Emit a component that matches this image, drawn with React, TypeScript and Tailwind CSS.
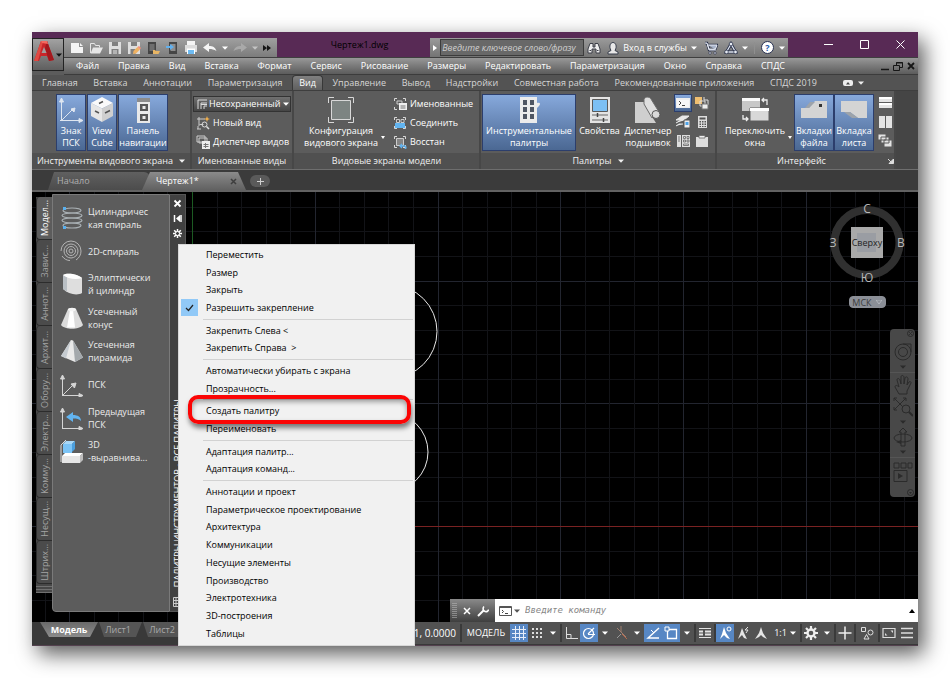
import type { ReactNode } from "react";
import clsx from "clsx";

const menuBar = ["Файл", "Правка", "Вид", "Вставка", "Формат", "Сервис", "Рисование", "Размеры", "Редактировать", "Параметризация", "Окно", "Справка", "СПДС"];

const ribbonTabs = ["Главная", "Вставка", "Аннотации", "Параметризация", "Вид", "Управление", "Вывод", "Надстройки", "Совместная работа", "Рекомендованные приложения", "СПДС 2019"];

const paletteTabs = ["Модел...", "Завис...", "Аннот...", "Архит...", "Обору...", "Электр...", "Комму...", "Несущ...", "Штрих..."];

const contextMenu = [
    ["Переместить", "Размер", "Закрыть", "Разрешить закрепление"],
    ["Закрепить Слева <", "Закрепить Справа  >"],
    ["Автоматически убирать с экрана", "Прозрачность..."],
    ["Создать палитру", "Переименовать"],
    ["Адаптация палитр...", "Адаптация команд..."],
    ["Аннотации и проект", "Параметрическое проектирование", "Архитектура", "Коммуникации", "Несущие элементы", "Производство", "Электротехника", "3D-построения", "Таблицы"],
];

function Icon({ w = 14, h = 14, children, className }: { w?: number; h?: number; children: ReactNode; className?: string }) {
    return (
        <svg width={w} height={h} viewBox={`0 0 ${w} ${h}`} fill="none" aria-hidden="true" className={clsx("shrink-0", className)}>
            {children}
        </svg>
    );
}

function Caret({ className }: { className?: string }) {
    return (
        <Icon w={6} h={4} className={className}>
            <path d="M0 .5h6L3 3.8z" fill="currentColor" />
        </Icon>
    );
}

/* ---------- title bar ---------- */

const quickIcons: { label: string; icon: ReactNode }[] = [
    { label: "Создать", icon: <path d="M1 2h8v4h4v6H1z M10 2l3 3h-3z" fill="#f4f4f4" /> },
    { label: "Открыть", icon: <><path d="M1.500 12V2.500h4l1 2h4v2" stroke="#e6e6e6" /><path d="M1.500 12.500 4 6.500h10L11 12.500z" fill="#e6e6e6" /></> },
    { label: "Сохранить", icon: <><path d="M1 1h12v12H1z" fill="#dedede" /><path d="M4 1h6v4H4zM3.500 8h7v5h-7z" fill="#808080" /><path d="M5 10h4M5 12h4" stroke="#e6e6e6" /></> },
    { label: "Сохранить как", icon: <><path d="M1 1h12v12H1z" fill="#dedede" /><path d="M4 1h6v4H4zM3.500 8h5v5h-5z" fill="#808080" /><path d="m6 13 .5-3 4-4 2.500 2.500-4 4z" fill="#efb262" /><path d="m10.500 6 2.500 2.500 1-1.500-2-2z" fill="#f58e78" /></> },
    { label: "Открыть из веб", icon: <><path d="M2 1h8v12H2z" fill="#454545" /><path d="M3.500 3h5v7h-5z" fill="#6e6e6e" /><path d="M7 13V9h2l1 1h4l-1.500 3z" fill="#e7b565" /></> },
    { label: "Сохранить в веб", icon: <><path d="M4 1h8v12H4z" fill="#454545" /><path d="M5.500 3h5v7h-5z" fill="#8d8d8d" /><path d="M1 5h4V3l4 3-4 3V7H1z" fill="#62b1ee" /></> },
    { label: "Печать", icon: <><path d="M3 0h8v4H3z" fill="#f4f4f4" /><path d="M1 4h12v7H1z" fill="#dcdcdc" /><path d="M3 7.500h8V13H3z" fill="#fff" /><path d="M4 9h6v4H4z" fill="#6dbbf2" /></> },
];

function Header() {
    return (
        <header className="flex bg-[#5c5c5c]">
            <div className="flex w-8 shrink-0 flex-col bg-[#582a55] pt-[6px]">
                <button aria-label="Меню приложения" className="flex h-[33px] items-center justify-center gap-[2px] border border-[#222] bg-linear-to-b from-[#a2a2a2] to-[#5f5f5f] pb-[8px] text-[#111]">
                    <Icon w={20} h={22}>
                        <path d="M7 1h6l7 19-5 1-2-5H7l-2 5H0z" fill="#c9262a" />
                        <path d="m7 1 2 1-5 19H0z" fill="#e04a43" />
                        <path d="m13 1 7 19-5 1-4-13z" fill="#a3181d" />
                        <path d="m10 7 2.500 6h-5z" fill="#a0a0a0" />
                        <path d="M7 1h6l1 3-6-1z" fill="#f26a60" />
                    </Icon>
                    <Caret className="mt-2" />
                </button>
                <div className="flex-1 bg-[#5c5c5c]" />
            </div>
            <div className="flex min-w-0 flex-1 flex-col">
                <div className="flex h-[25px] items-end bg-[#582a55]">
                    <div className="flex h-[19px] items-center gap-[5px] bg-linear-to-b from-[#a0a0a0] to-[#7c7c7c] px-[6px]">
                        {quickIcons.map((q) => (
                            <button key={q.label} aria-label={q.label}><Icon>{q.icon}</Icon></button>
                        ))}
                        <button aria-label="Отменить" className="flex items-center gap-[5px] text-white">
                            <Icon w={14} h={10}><path d="M0 4.500 6 0v3c4 0 6 1 7.500 5C11 6.500 9 6 6 6v3z" fill="#f4f4f4" /></Icon>
                            <Caret />
                        </button>
                        <button aria-label="Вернуть" className="flex items-center gap-[5px] text-[#c4c4c4]">
                            <Icon w={14} h={10}><path d="M14 4.500 8 0v3C4 3 2 4 .5 8 3 6.500 5 6 8 6v3z" fill="#a9a9a9" /></Icon>
                            <Caret />
                        </button>
                        <button aria-label="Ещё">
                            <Icon w={8} h={8}><path d="M0 1l4 3-4 3zM4 1l4 3-4 3z" fill="#151515" /></Icon>
                        </button>
                    </div>
                    <div className="flex-1 self-center pl-3 text-center text-[9px] text-black">Чертеж1.dwg</div>
                    <div className="flex h-[19px] items-center bg-linear-to-b from-[#9b9b9b] to-[#747474] pr-[3px] text-white">
                        <button aria-label="Показать поиск" className="flex w-[10px] justify-center">
                            <Icon w={4} h={6}><path d="M0 0l4 3-4 3z" fill="#fff" /></Icon>
                        </button>
                        <input aria-label="Поиск" placeholder="Введите ключевое слово/фразу" className="h-[17px] w-36 border border-[#3c3c3c] bg-[#686868] px-px text-[9px] italic placeholder:text-[#cfcfcf]" />
                        <div className="flex items-center gap-[6px] pl-[3px]">
                            <button aria-label="Найти">
                                <Icon><path d="M3 2.500h3V6h2V2.500h3L13 8v4H9V8H5v4H1V8z" fill="#eee" stroke="#3c3f48" /><path d="M2.500 9.500h1.500M10 9.500h1.500" stroke="#3c3f48" /></Icon>
                            </button>
                            <button className="flex items-center gap-[4px] whitespace-nowrap text-[9px]">
                                <Icon w={12} h={14}><path d="M1 13v-2l3-1.500C1.500 5 3.500 1.500 6 1.500S10.500 5 8 9.500L11 11v2z" fill="#e8e8e8" stroke="#383e4c" /></Icon>
                                Вход в службы
                                <Caret />
                            </button>
                        </div>
                        <div className="flex items-center gap-[6px] pl-[7px]">
                            <button aria-label="Магазин">
                                <Icon><path d="M1 2h2l2 7h7M3.500 4H13l-1.500 4H5z" stroke="#28304a" strokeWidth="2.400" /><path d="M1 2h2l2 7h7M3.500 4H13l-1.500 4H5z" fill="#a8b3ca" stroke="#e8ecf4" /><path d="M5 11h2v2H5zM10 11h2v2h-2z" fill="#e8ecf4" stroke="#28304a" strokeWidth=".6" /></Icon>
                            </button>
                            <button aria-label="Связь" className="flex items-center gap-[4px]">
                                <Icon><path d="M7 3 11.500 11h-9z" stroke="#28304a" strokeWidth="3" /><path d="M7 3 11.500 11h-9z" stroke="#dfe5f0" strokeWidth="1.300" /><circle cx="7" cy="3" r="1.800" fill="#e8ecf4" stroke="#28304a" strokeWidth=".7" /><circle cx="2.500" cy="11" r="1.800" fill="#e8ecf4" stroke="#28304a" strokeWidth=".7" /><circle cx="11.500" cy="11" r="1.800" fill="#e8ecf4" stroke="#28304a" strokeWidth=".7" /></Icon>
                                <Caret />
                            </button>
                            <span className="h-3 w-px bg-[#8f8f8f]" />
                            <button aria-label="Справка" className="flex items-center gap-[5px]">
                                <span className="flex size-[13px] items-center justify-center rounded-full border border-[#283252] bg-white text-[9px] font-bold text-[#1d58a8]">?</span>
                                <Caret />
                            </button>
                        </div>
                    </div>
                    <div className="flex self-center pl-[22px] text-white">
                        <button aria-label="Свернуть" className="flex h-5 w-9 items-center justify-center"><Icon w={9} h={9}><path d="M0 4.500h9" stroke="currentColor" /></Icon></button>
                        <button aria-label="Развернуть" className="flex h-5 w-9 items-center justify-center"><Icon w={9} h={9}><path d="M.5.5h8v8h-8z" stroke="currentColor" /></Icon></button>
                        <button aria-label="Закрыть" className="flex h-5 w-9 items-center justify-center"><Icon w={9} h={9}><path d="m.5.5 8 8m0-8-8 8" stroke="currentColor" /></Icon></button>
                    </div>
                </div>
                <nav className="flex h-[18px] items-center justify-between border-y border-t-[#3f3f3f] border-b-[#3c3c3c] bg-linear-to-b from-[#989898] to-[#5c5c5c] pr-[3px] pl-3">
                    <div className="flex w-[709px] justify-between text-[9px] font-medium text-white">
                        {menuBar.map((m) => <button key={m}>{m}</button>)}
                    </div>
                    <div className="flex items-center gap-[4px] text-[#161616]">
                        <button aria-label="Свернуть чертёж"><Icon w={9} h={9}><path d="M1 7.500h8" stroke="currentColor" strokeWidth="1.500" /></Icon></button>
                        <button aria-label="Восстановить чертёж"><Icon w={10} h={9}><path d="M3.500 3V.5h6v5H7M.5 3.500h6v5h-6z" stroke="currentColor" /><path d="M3 1h7" stroke="currentColor" /></Icon></button>
                        <button aria-label="Закрыть чертёж"><Icon w={8} h={8}><path d="m1 1 6 6m0-6L1 7" stroke="currentColor" strokeWidth="1.800" /></Icon></button>
                    </div>
                </nav>
            </div>
        </header>
    );
}

function RibbonTabs() {
    return (
        <nav className="flex h-4 items-center border-b border-[#3e3e3e] bg-[#535353] pl-[10px] text-[9px] text-[#d6d6d6]">
            <div className="flex h-full w-[775px] items-center justify-between">
                {ribbonTabs.map((t) => (
                    <button key={t} className={clsx("h-full whitespace-nowrap", t === "Вид" && "-mx-[6px] rounded-t-sm border border-b-0 border-[#383838] bg-linear-to-b from-[#808080] to-[#5f5f5f] px-[6px] text-white")}>{t}</button>
                ))}
            </div>
            <button aria-label="Вид ленты" className="ml-[26px] flex items-center gap-[5px] text-[#eee]">
                <Icon w={10} h={6}><rect width="10" height="6" rx="2" fill="#eee" /><path d="M3 4.500h4L5 2z" fill="#444" /></Icon>
                <Caret />
            </button>
        </nav>
    );
}

/* ---------- ribbon ---------- */

function Panel({ title, children, className, caret, launcher }: { title: string; children: ReactNode; className: string; caret?: boolean; launcher?: boolean }) {
    return (
        <section className={clsx("flex shrink-0 flex-col border-r-2 border-[#474747] bg-[#5c5c5c]", className)}>
            <div className="flex h-[62px] items-start pt-[3px]">{children}</div>
            <h2 className={clsx("flex h-4 items-center justify-center gap-[6px] bg-[#505050] pb-px text-[9px] whitespace-nowrap text-[#f0f0f0]", launcher && "pr-2")}>
                {title}
                {caret && <Caret />}
                {launcher && (
                    <Icon w={6} h={6} className="absolute right-[24px]"><path d="M0 1l3 3M5.500 1v4.500H1z" stroke="#ddd" fill="#ddd" /></Icon>
                )}
            </h2>
        </section>
    );
}

function BigButton({ icon, lines, active, className, caret }: { icon: ReactNode; lines: string[]; active?: boolean; className: string; caret?: boolean }) {
    return (
        <button className={clsx("flex h-[57px] shrink-0 flex-col items-center border pt-px text-[9px] leading-[12px] whitespace-nowrap text-white", active ? "border-[#2c3e6c] bg-linear-to-b from-[#87a9dc] to-[#4b6893]" : "border-transparent", className)}>
            <Icon w={28} h={28}>{icon}</Icon>
            <span className="mt-px flex items-center gap-[3px]">
                <span>{lines.map((l) => <span key={l} className="block">{l}</span>)}</span>
                {caret && <Icon w={4} h={3} className="-mr-[7px]"><path d="M0 0h4L2 3z" fill="#fff" /></Icon>}
            </span>
        </button>
    );
}

function SmallRow({ icon, label }: { icon: ReactNode; label: string }) {
    return (
        <button className="flex h-[17px] items-center gap-[3px] text-[9px] whitespace-nowrap text-white">
            <Icon>{icon}</Icon>
            {label}
        </button>
    );
}

const corners = <path d="M1.500 4V1.500H4M10 1.500h2.500V4M1.500 10v2.500H4M10 12.500h2.500V10" stroke="#d8d8d8" />;

function Ribbon() {
    return (
        <div className="relative flex h-[79px] border-b border-[#6e6e6e] bg-[#454545]">
            <Panel title="Инструменты видового экрана" caret className="w-[160px]">
                <div className="flex gap-px pl-6">
                    <BigButton active className="w-[30px]" lines={["Знак", "ПСК"]} icon={<path d="M4.500 25V4M2.500 6l2-4 2 4zM3 24.500h21M22 22.500l4 2-4 2zM5 24 16 13M14 13l4-1-1 4z" stroke="#dfe6f0" fill="#dfe6f0" />} />
                    <BigButton active className="w-[30px]" lines={["View", "Cube"]} icon={<><path d="m14 1 11 6-11 5.500L3 7z" fill="#fafafa" /><path d="m3 7 11 5.500V26L3 20z" fill="#e6e6e6" /><path d="M25 7v13l-11 6V12.500z" fill="#cfcfcf" /><path d="m7 15 4 2M17 17l5-2.500M11 7.500l4-2" stroke="#555" strokeWidth="1.500" /></>} />
                    <BigButton active className="w-[50px]" lines={["Панель", "навигации"]} icon={<><path d="M8 2h13v25H8z" fill="#e9e9e9" /><path d="M8 2h13v4H8z" fill="#8b8b8b" /><path d="M11 8h8v7h-8zM11 18h8v7h-8z" fill="#555" /><path d="M13.500 10h3v3h-3zM13.500 20h3v3h-3z" fill="#e9e9e9" /></>} />
                </div>
            </Panel>
            <Panel title="Именованные виды" className="w-[102px]">
                <div className="flex flex-col gap-[2px] pt-[2px] pl-px">
                    <div className="flex h-4 w-[98px] items-center border border-[#333] bg-linear-to-b from-[#707070] to-[#454545] pr-px pl-[3px]">
                        <Icon w={11} h={11}><path d="M1 10V1h9M4 10V4h6M7 10V7h3M4 5.500h6" stroke="#ddd" /></Icon>
                        <select aria-label="Вид" className="w-full flex-1 appearance-none bg-transparent pl-px text-[9px] text-white">
                            <option>Несохраненный</option>
                        </select>
                        <Caret className="text-white" />
                    </div>
                    <div className="flex flex-col gap-[2px] pl-[3px]">
                        <SmallRow label="Новый вид" icon={<><path d="M3 1v9M1 3h8M3.500 8.500h4M1 13h4M2 10v3" stroke="#ccc" /><circle cx="8.500" cy="8.500" r="2.500" stroke="#ddd" /><path d="m10.500 10.500 2.500 2.500" stroke="#ddd" strokeWidth="1.500" /><path d="m11 0 .8 2.200L14 3l-2.200.8L11 6l-.8-2.200L8 3l2.200-.8z" fill="#f6b24c" /></>} />
                        <SmallRow label="Диспетчер видов" icon={<><path d="M1 1h8v6H1zM3 3h8v5H3z" fill="#5c5c5c" stroke="#ccc" /><path d="M6 6h8v8H6z" fill="#eee" /><path d="M7.500 9.500h5M7.500 11.500h5M9.500 8v5" stroke="#777" /></>} />
                    </div>
                </div>
            </Panel>
            <Panel title="Видовые экраны модели" className="w-[187px]">
                <BigButton caret className="ml-2 w-[78px]" lines={["Конфигурация", "видового экрана"]} icon={<><path d="M4.500 4.500h19v19h-19z" fill="#7d8482" stroke="#d8d8d8" /><path d="M1.500 7V1.500H7M21 1.500h5.500V7M1.500 21v5.500H7M21 26.500h5.500V21" stroke="#d8d8d8" /></>} />
                <div className="flex flex-col gap-[2px] pt-px pl-[13px]">
                    <SmallRow label="Именованные" icon={<>{corners}<path d="M4 4h5v3H4z" stroke="#ccc" /><path d="M6 6h8v7H6z" fill="#f0f0f0" /><path d="M7.500 9h5M7.500 11h5" stroke="#777" /></>} />
                    <SmallRow label="Соединить" icon={<>{corners}<path d="M3.500 3.500h3v3h-3zM8 3.500h3v3H8z" stroke="#ccc" /><path d="M2 7h10v5H2z" fill="#62b4f0" /></>} />
                    <SmallRow label="Восстан" icon={<>{corners}<path d="M3.500 3.500h7v7h-7z" fill="#858585" stroke="#ccc" /><path d="M7 11h4.500a1.500 1.500 0 0 1 0 3M9 9l-2 2 2 2" stroke="#62b4f0" strokeWidth="1.300" /></>} />
                </div>
            </Panel>
            <Panel title="Палитры" caret className="w-[236px]">
                <BigButton active className="ml-px w-[94px]" lines={["Инструментальные", "палитры"]} icon={<><path d="M5 1h17v6c3-1 4 1 2 3l-2 2v15H5z" fill="#ececec" /><path d="M8 4h4v5H8zM15 4h4v5h-4zM8 11h4v5H8zM15 11h4v5h-4zM8 18h4v5H8zM15 18h4v5h-4z" fill="#4f5663" /></>} />
                <BigButton className="w-[47px]" lines={["Свойства"]} icon={<><path d="M4 1h20v26H4z" fill="#e4e4e4" /><path d="M6.500 3.500h15v12h-15z" fill="#7cc0f5" stroke="#5a5a5a" /><path d="M6 19h16M6 24h16" stroke="#666" /><path d="M11.500 17v4M17.500 22v4" stroke="#444" strokeWidth="1.500" /></>} />
                <BigButton className="w-[50px]" lines={["Диспетчер", "подшивок"]} icon={<><path d="M1 6h9l3 6 4 7 5 8H1z" fill="#cfcfcf" /><path d="M10 3c2-3 6-2 7 0l8 13-7 6L10 8z" fill="#dedede" stroke="#6c6c6c" /><circle cx="22" cy="18.500" r="4" fill="#d9d9d9" stroke="#555" /></>} />
                <div className="grid grid-cols-2 gap-x-px gap-y-px pl-px">
                    <button aria-label="Командная строка" className="flex size-[18px] items-center justify-center border border-[#2c3e6c] bg-linear-to-b from-[#87a9dc] to-[#4b6893]"><Icon><path d="M0 2h14v10H0z" fill="#eee" /><path d="M1 4h12v7H1z" fill="#f7f7f7" /><path d="m3 5 2 2-2 2M6 9.500h3" stroke="#444" /></Icon></button>
                    <button aria-label="Слои" className="flex size-[18px] items-center justify-center"><Icon><path d="M0 1h7v7H0z" fill="#efbe70" /><path d="M5 5h5v5H5zM9 1v3h4v5" stroke="#ddd" /><path d="M7 8h6v5H7z" fill="#eee" stroke="#777" /></Icon></button>
                    <button aria-label="Свойства слоя" className="flex size-[18px] items-center justify-center"><Icon><path d="m0 5 6-4h7L8 5zM0 8l5-3h4M0 11l3-2h4" fill="#e8e8e8" stroke="#e8e8e8" /><path d="M8 5h6v8H8z" fill="#eee" stroke="#555" /><path d="M9.500 7h3v3h-3z" fill="#4da3e8" /></Icon></button>
                    <button aria-label="Калькулятор" className="flex size-[18px] items-center justify-center"><Icon><path d="M3 1h9v12H3z" fill="#dedede" /><path d="M4.500 2.500h6v2h-6zM4.500 6h1.500v1.500H4.500zM7 6h1.500v1.500H7zM9.500 6H11v1.500H9.500zM4.500 8.500h1.500V10H4.500zM7 8.500h1.500V10H7zM9.500 8.500H11V10H9.500zM4.500 11h1.500v1H4.500zM7 11h1.500v1H7zM9.500 11H11v1H9.500z" fill="#555" /></Icon></button>
                    <button aria-label="Блоки" className="flex size-[18px] items-center justify-center"><Icon><path d="M1 1h4v12H1zM6 1h8v12H6z" fill="#dedede" /><path d="M2 3h2M2 5h2M2 7h2M7.500 2.500h2v2h-2zM11 2.500h2v2h-2zM7.500 6h2v2h-2zM11 6h2v2h-2zM7.500 10h5v1.500h-5z" stroke="#666" strokeWidth=".8" /></Icon></button>
                    <button aria-label="Пометки" className="flex size-[18px] items-center justify-center"><Icon><path d="M1 3h12v10H1z" fill="#dedede" /><path d="M4 1.500h6V4H4z" fill="#eee" stroke="#666" strokeWidth=".8" /></Icon></button>
                </div>
            </Panel>
            <Panel title="Интерфейс" launcher className="w-[179px]">
                <BigButton caret className="ml-1 w-[68px]" lines={["Переключить", "окна"]} icon={<><path d="M1 2h18v13H1z" fill="#c8c8c8" /><path d="M1 2h18v3H1z" fill="#fafafa" /><path d="M9 12h19v13H9z" fill="#d8d8d8" stroke="#5c5c5c" /><path d="M9 12h19v3H9z" fill="#fff" /><path d="M21 4h5v5M23 2l-2 2 2 2M7 23H2v-4M5 21l2 2-2 2" stroke="#eee" strokeWidth="1.300" /></>} />
                <BigButton active className="ml-[5px] w-10" lines={["Вкладки", "файла"]} icon={<><path d="M1 22V12h8l6-7h12v17z" fill="#d4d4d4" /><path d="m5 12 5-6h5l-6 6z" fill="#9da3aa" /><path d="M19 8h3v3h-3z" fill="#333" /></>} />
                <BigButton active className="w-10" lines={["Вкладка", "листа"]} icon={<><path d="M1 5h26v17H18l-8-6H1z" fill="#d4d4d4" /><path d="M4 16h6l8 6h-6z" fill="#9da3aa" /></>} />
                <div className="flex flex-col gap-[6px] pt-[2px] pl-[4px]">
                    <button aria-label="По горизонтали"><Icon h={13}><path d="M1 1h13v5H1zM1 7h13v5H1z" fill="#e4e4e4" /><path d="M1 1h13v2H1zM1 7h13v2H1z" fill="#fff" /></Icon></button>
                    <button aria-label="По вертикали"><Icon h={13}><path d="M1 1h6v12H1zM8 1h6v12H8z" fill="#e4e4e4" /></Icon></button>
                    <button aria-label="Каскадом"><Icon h={13}><path d="M0 0h8v6H0zM3 3h8v6H3zM6 6h8v7H6z" fill="#e4e4e4" stroke="#5c5c5c" /></Icon></button>
                </div>
            </Panel>
        </div>
    );
}

function FileTabs() {
    return (
        <div className="flex h-[22px] items-end border-b-2 border-[#626262] bg-[#3b3b3b] pl-4 text-[9px]">
            <button className="h-[18px] w-[102px] rounded-t-md bg-linear-to-b from-[#606060] to-[#4c4c4c] pl-[9px] text-left text-[#b0b0b0] [clip-path:polygon(6px_0,100%_0,100%_100%,0_100%)]">Начало</button>
            <div className="-ml-2 flex h-[18px] w-[104px] items-center justify-between rounded-t-md bg-linear-to-b from-[#8b8b8b] to-[#616161] pr-[9px] pl-[14px] text-white [clip-path:polygon(8px_0,96px_0,100%_100%,0_100%)]">
                Чертеж1*
                <button aria-label="Закрыть вкладку"><Icon w={7} h={7}><path d="m1 1 5 5m0-5L1 6" stroke="#3e3e3e" strokeWidth="1.500" /></Icon></button>
            </div>
            <button aria-label="Новая вкладка" className="mb-[3px] ml-[4px] flex h-3 w-5 items-center justify-center rounded-md bg-[#5a5a5a]"><Icon w={7} h={7}><path d="M3.500 0v7M0 3.500h7" stroke="#d0d0d0" /></Icon></button>
        </div>
    );
}

/* ---------- drawing area ---------- */

const STEP = 24.55;
const ORIGIN = { x: 160.5, y: 334.5 };

function DrawingCanvas() {
    const range = Array.from({ length: 80 }, (_, i) => i - 20);
    return (
        <svg className="absolute inset-0 size-full" shapeRendering="crispEdges" aria-label="Чертёж">
            {range.map((i) => (
                <g key={i} stroke={i % 5 === 0 ? "#22252f" : "#121317"}>
                    <line x1={ORIGIN.x + i * STEP} x2={ORIGIN.x + i * STEP} y1="0" y2="100%" />
                    <line y1={ORIGIN.y + i * STEP} y2={ORIGIN.y + i * STEP} x1="0" x2="100%" />
                </g>
            ))}
            <path d={`M${ORIGIN.x} 0V${ORIGIN.y}`} stroke="#1c5a22" />
            <path d={`M${ORIGIN.x} ${ORIGIN.y}H4000`} stroke="#7a2222" />
            <g fill="none" stroke="#e8e8e8" shapeRendering="auto">
                <circle cx="358.500" cy="139.500" r="46.500" />
                <circle cx="356.500" cy="260" r="39.500" />
            </g>
        </svg>
    );
}

function ViewCube() {
    return (
        <div className="absolute top-[9px] right-[12px] flex w-[78px] flex-col items-center gap-[9px]">
            <svg width="78" height="86" viewBox="0 0 78 86" className="font-['Open_Sans',sans-serif]">
                <circle cx="39" cy="41.500" r="32.500" fill="none" stroke="#303030" strokeWidth="8" />
                <path d="M23 26h32v31H23z" fill="#a9a9a9" />
                <path d="M29 32h19v19H29z" fill="#9a9da3" />
                <text x="39" y="45" textAnchor="middle" fontSize="9" fill="#222">Сверху</text>
                <g fontSize="12" fill="#b8b8b8" textAnchor="middle">
                    <text x="39" y="12">С</text>
                    <text x="5" y="46">З</text>
                    <text x="73" y="46">В</text>
                    <text x="39" y="81">Ю</text>
                </g>
            </svg>
            <button className="flex h-3 w-[37px] items-center justify-center gap-1 rounded-sm border border-[#8d9097] bg-[#8b8f97] text-[9px] leading-none text-[#3b3b3b]">
                МСК
                <Icon w={6} h={4}><path d="M0 0h6L3 4z" stroke="#c0c4ca" strokeWidth=".7" /></Icon>
            </button>
        </div>
    );
}

function NavBar() {
    return (
        <div className="absolute top-[137px] right-[3px] flex w-[25px] flex-col items-center rounded-sm bg-[#484848] py-px text-[#2b2b2b]">
            <button aria-label="Закрыть панель" className="mr-px self-end"><Icon w={7} h={9}><circle cx="3.500" cy="3.500" r="3" stroke="currentColor" /><path d="m2 2 3 3m0-3L2 5" stroke="currentColor" strokeWidth=".8" /></Icon></button>
            <button aria-label="Штурвал"><Icon w={20} h={24}><circle cx="10" cy="13" r="8" stroke="currentColor" /><circle cx="10" cy="13" r="4.500" stroke="currentColor" /><path d="M10 5h8v8" stroke="currentColor" /></Icon></button>
            <Caret className="mt-[2px]" />
            <span className="mt-[3px] h-px w-full bg-[#555]" />
            <button aria-label="Панорамирование"><Icon w={20} h={24}><path d="m6 21-4-7c0-2 2-2 4 0L4 7c0-2 2-2 3 0l1 4V4c0-2 2.500-2 3 0v7l1-6c1-2 3-1 3 1l-1 6 2-3c1-1 2.500 0 2 1l-4 8v3z" stroke="currentColor" /></Icon></button>
            <button aria-label="Показать границы"><Icon w={20} h={20}><path d="m1 1 13 13M13 1 1 13M1 4V1h3M10 1h3v3M1 10v3h3" stroke="currentColor" /><circle cx="13" cy="12" r="4" fill="#484848" stroke="currentColor" /><path d="m16 15 4 4" stroke="currentColor" strokeWidth="2" /></Icon></button>
            <Caret className="mt-[3px]" />
            <button aria-label="Орбита"><Icon w={20} h={26}><ellipse cx="10" cy="14" rx="9" ry="4" stroke="currentColor" /><path d="M8 22V8H6l4-4 4 4h-2v14z" stroke="currentColor" /><path d="M3 18l5-2v4z" fill="currentColor" /></Icon></button>
            <Caret />
            <span className="mt-[3px] mb-1 h-px w-full bg-[#555]" />
            <button aria-label="Аниматор"><Icon w={20} h={20}><path d="M1 1h5v5H1zM8 1h5v5H8zM15 1h4v5h-4zM1 8.500h13v11H1z" stroke="currentColor" /><path d="m5 11 5 3-5 3z" fill="currentColor" /></Icon></button>
            <button aria-label="Параметры панели" className="mt-[7px] mr-px self-end"><Icon w={7} h={7}><circle cx="3.500" cy="3.500" r="3" stroke="currentColor" /><path d="M2 3h3L3.500 5z" fill="currentColor" /></Icon></button>
        </div>
    );
}

const axes = <path d="M2.500 23V4M.5 6l2-4 2 4zM2 22.500h18M19 20.500l4 2-4 2z" stroke="#d5d5d5" fill="#d5d5d5" />;

const tools: { lines: string[]; icon: ReactNode }[] = [
    { lines: ["Цилиндричес", "кая спираль"], icon: <><g stroke="#a9b0b4" strokeWidth="1.200"><ellipse cx="12" cy="4.500" rx="9" ry="2.500" /><ellipse cx="12" cy="9.500" rx="10" ry="2.500" /><ellipse cx="12" cy="14.500" rx="10" ry="2.500" /><ellipse cx="12" cy="19.500" rx="9" ry="2.500" /></g><path d="M3 1h3v3H3zM3 20h3v3H3z" fill="#5ab0ee" /></> },
    { lines: ["2D-спираль"], icon: <g stroke="#b4b4b4"><circle cx="11" cy="12" r="2" /><circle cx="11" cy="12" r="4.500" /><circle cx="11" cy="12" r="7" /><path d="M1 12a10 10 0 0 1 20 0c0 4-2 7-5 9M2 17c2 3 5 4.500 8 4.500" /></g> },
    { lines: ["Эллиптически", "й цилиндр"], icon: <><path d="M3 3C8 0 19 3 22 6v15c-5 3-14 1-19-4z" fill="#dedede" /><path d="M3 3C8 0 19 3 22 6 16 8 8 7 3 3z" fill="#fff" /><path d="M3 3c2 1.500 3 2 4 2.500v14L3 17z" fill="#b9bfc4" /></> },
    { lines: ["Усеченный", "конус"], icon: <><path d="M8 3c2-1.500 6-1.500 8 0l7 16c-4 5-18 5-22 0z" fill="#dcdcdc" /><path d="M10 3.500h3l2 18H7z" fill="#fff" /><ellipse cx="12" cy="3.500" rx="4" ry="1.800" fill="#f4f4f4" /></> },
    { lines: ["Усеченная", "пирамида"], icon: <><path d="m11 1 2 .5 10 17-8 4.500L1 17z" fill="#e9e9e9" /><path d="m13 1.500 10 17-8 4.500z" fill="#a3a8ac" /><path d="m11 1-10 16 5 2.500z" fill="#c5cbd0" /></> },
    { lines: ["ПСК"], icon: <>{axes}<path d="M3 22 13 12M11 11l5-1-1.500 5z" stroke="#d5d5d5" fill="#d5d5d5" /></> },
    { lines: ["Предыдущая", "ПСК"], icon: <>{axes}<path d="m6 11 7-5v3c5 0 8 2 8 6-2-2-4-2.500-8-2.500V16z" fill="#62b4f0" /></> },
    { lines: ["3D", "-выравнива..."], icon: <><path d="M1 23V6l5-5" stroke="#ddd" /><path d="M3 5 6 2h9l-3 3z" fill="#a8d8f8" /><path d="m12 5 3-3v8l-3 3z" fill="#4a9fde" /><path d="M3 5h9v9H3z" fill="#7cc4f6" /><path d="M2 17l3-3h18l-3 3z" fill="#fff" /><path d="M2 17h18v7H2z" fill="#e6e6e6" /><path d="m20 17 3-3v7l-3 3z" fill="#bdbdbd" /></> },
];

function ToolPalette() {
    return (
        <div className="absolute top-[2px] left-[4px] flex h-[418px] text-[9px] text-[#ececec]">
            <div className="mt-[3px] h-[396px] w-4 bg-[#474747]">
                {paletteTabs.map((t, i) => (
                    <button key={t} className={clsx("flex h-[43px] w-4 items-center justify-center rounded-l-sm border-b border-l border-[#2c2c2c]", i === 0 ? "bg-[#5c5c5c] text-white" : "bg-[#4b4b4b] text-[#a4a4a4]")}>
                        <span className="rotate-180 leading-none [writing-mode:vertical-rl]">{t}</span>
                    </button>
                ))}
                <div className="flex flex-col gap-[2px] pt-[2px]">
                    <span className="h-px bg-[#707070]" />
                    <span className="h-px bg-[#707070]" />
                    <span className="h-px bg-[#707070]" />
                </div>
            </div>
            <div className="w-[118px] rounded-bl-sm border border-[#7a7a7a] bg-[#5c5c5c] pt-[6px] pl-[7px]">
                <div className="flex h-[267px] flex-col">
                    {tools.map((t) => (
                        <button key={t.lines[0]} className="flex flex-1 items-center gap-1 text-left leading-[13px] whitespace-nowrap">
                            <Icon w={24} h={24}>{t.icon}</Icon>
                            <span>{t.lines.map((l) => <span key={l} className="block">{l}</span>)}</span>
                        </button>
                    ))}
                </div>
            </div>
            <div className="flex w-4 flex-col items-center gap-[6px] border border-l-0 border-[#565656] bg-[#414141] pt-[4px] pb-1 text-white">
                <button aria-label="Закрыть палитры"><Icon w={9} h={9}><path d="m1.500 1.500 6 6m0-6-6 6" stroke="currentColor" strokeWidth="1.800" /></Icon></button>
                <button aria-label="Автоскрытие"><Icon w={9} h={9}><path d="M1.500 1v7M8 1v7" stroke="currentColor" strokeWidth="1.500" /><path d="m3 4.500 4-3.500v7z" fill="currentColor" /></Icon></button>
                <button aria-label="Свойства палитры"><Icon w={9} h={9}><path d="M4.500 0v9M0 4.500h9M1.200 1.200l6.600 6.600M7.800 1.200 1.200 7.800" stroke="currentColor" strokeWidth="1.500" /><circle cx="4.500" cy="4.500" r="2" fill="#414141" stroke="currentColor" /></Icon></button>
                <span className="mt-auto mb-1 rotate-180 leading-none whitespace-nowrap [writing-mode:vertical-rl]">ПАЛИТРЫ ИНСТРУМЕНТОВ - ВСЕ ПАЛИТРЫ</span>
                <Icon w={9} h={10}><path d="M.5.5h8v9h-8zM.5 3.500h8M.5 6.500h8M3 .5v9M6 .5v9" stroke="#ccc" /></Icon>
            </div>
        </div>
    );
}

function CommandLine() {
    return (
        <div className="absolute right-0 bottom-0 flex h-[23px] w-[468px] bg-white">
            <div className="flex w-[45px] items-center gap-[6px] bg-linear-to-b from-[#8a8a8a] to-[#3f3f3f] pl-[2px] text-white">
                <Icon w={5} h={15}><path d="M1 0v15M3 0v15M5 0v15" stroke="#c0c0c0" strokeDasharray="1 1" /></Icon>
                <button aria-label="Закрыть"><Icon w={8} h={8}><path d="m1 1 6 6m0-6L1 7" stroke="currentColor" strokeWidth="1.500" /></Icon></button>
                <button aria-label="Настройка"><Icon w={12} h={12}><path d="m1 11 6-6" stroke="currentColor" strokeWidth="2" /><path d="M7 1.500C5.500 3 6 6 8 6.500s3.500-.5 3.500-2" stroke="currentColor" strokeWidth="1.600" /></Icon></button>
            </div>
            <button aria-label="Недавние команды" className="flex items-center gap-[2px] pl-[4px] text-[#555]">
                <Icon w={13} h={10}><path d="M.5.500h12v9H.5z" stroke="#555" /><path d="M1 1.500h11" stroke="#555" /><path d="m3 4 1.500 1.500L3 7M6 7.500h3" stroke="#444" /></Icon>
                <Caret />
            </button>
            <input aria-label="Команда" placeholder="Введите команду" className="min-w-0 flex-1 pl-[5px] font-['DejaVu_Sans_Mono',monospace] text-[9px] italic outline-none placeholder:text-[#888]" />
            <button aria-label="История" className="pr-[3px] text-black"><Icon w={6} h={4}><path d="M0 4h6L3 0z" fill="currentColor" /></Icon></button>
        </div>
    );
}

/* ---------- status bar ---------- */

function StatusIcon({ label, active, children }: { label: string; active?: boolean; children: ReactNode }) {
    return (
        <button aria-label={label} className={clsx("flex h-full w-[18px] items-center justify-center", active && "bg-[#5787c4]")}>
            <Icon>{children}</Icon>
        </button>
    );
}

function Drop({ label }: { label: string }) {
    return <button aria-label={label} className="flex h-full w-[14px] items-center justify-center"><Caret /></button>;
}

function Divider() {
    return <span className="h-full w-[2px] bg-[#3a3a3a]" />;
}

function StatusBar() {
    return (
        <footer className="flex h-6 items-start justify-between border-b border-[#54414f] bg-[#393939] pl-2 text-[9px]">
            <div className="flex leading-[14px] text-[#a9a9a9]">
                <button className="h-[15px] w-[58px] bg-linear-to-b from-[#6a6a6a] to-[#8c8c8c] font-bold text-white [clip-path:polygon(0_0,100%_0,50px_100%,9px_100%)]">Модель</button>
                <button className="-ml-1 h-[15px] w-[48px] bg-[#555] [clip-path:polygon(5px_0,100%_0,42px_100%,10px_100%)]">Лист1</button>
                <button className="-ml-1 h-[15px] w-[48px] bg-[#555] [clip-path:polygon(5px_0,100%_0,42px_100%,10px_100%)]">Лист2</button>
            </div>
            <div className="flex h-[22px] items-center bg-[#525252] py-[2px] pr-[2px] text-white">
                <span className="pr-[4px] text-[10px] whitespace-nowrap">2354.4421, 0.0000</span>
                <Divider />
                <button className="h-full w-[48px] text-center font-medium">МОДЕЛЬ</button>
                <StatusIcon label="Сетка" active><path d="M3.500 0v14M7.500 0v14M11.500 0v14M0 3.500h14M0 7.500h14M0 11.500h14" stroke="#e6eefa" /></StatusIcon>
                <StatusIcon label="Шаговая привязка"><path d="M2 3h10M2 7h10M2 11h10" stroke="#ddd" strokeWidth="2" strokeDasharray="2 2" /></StatusIcon>
                <Drop label="Параметры привязки" />
                <Divider />
                <StatusIcon label="Орто"><path d="M2.500 1v11.500H14M3 8.500h4v4" stroke="#ddd" /></StatusIcon>
                <StatusIcon label="Полярное отслеживание" active><circle cx="6.500" cy="7.500" r="5" stroke="#fff" strokeWidth="1.200" /><path d="M6 8.500h7M6 8l6-6" stroke="#fff" strokeWidth="1.200" /></StatusIcon>
                <Drop label="Углы" />
                <StatusIcon label="Изометрия"><path d="M3 2l9 9M7 0v6" stroke="#a08070" /><path d="m8 8 5 5" stroke="#b5694e" /><path d="m3 12 4-4" stroke="#999" /></StatusIcon>
                <Drop label="Изоплоскость" />
                <StatusIcon label="Отслеживание" active><path d="M13 2 2 12h11" stroke="#fff" strokeWidth="1.400" /><path d="m5 4 3 3" stroke="#fff" /></StatusIcon>
                <StatusIcon label="Объектная привязка" active><path d="M3.500 3.500h9v9h-9z" stroke="#fff" strokeWidth="1.300" /><path d="M1 1h4v4H1z" fill="#5787c4" stroke="#fff" /></StatusIcon>
                <Drop label="Режимы привязки" />
                <Divider />
                <StatusIcon label="Вес линий"><path d="M1 2.500h12M1 11.500h12" stroke="#e4e4e4" /><path d="M1 5.500h4M7 5.500h6M1 8.500h4M7 8.500h6" stroke="#e4e4e4" strokeWidth="2" /></StatusIcon>
                <Divider />
                <StatusIcon label="Аннотации" active><path d="m6 1 2 6 4 6-3-1-3-3-4 4 2-5z" fill="#fff" /><circle cx="11" cy="3" r="2" stroke="#fff" /></StatusIcon>
                <StatusIcon label="Автомасштаб"><path d="m6 2 2 5 3 6-3-1-2-3-4 4 2-5z" fill="#e4e4e4" /><path d="m12 1-3 3h3l-2 3" stroke="#e4e4e4" /></StatusIcon>
                <StatusIcon label="Масштаб"><path d="m7 1 2 6 4 6-4-2-2-2-2 2-4 2 4-6z" fill="#e4e4e4" /></StatusIcon>
                <button className="flex h-full w-[30px] items-center justify-center gap-[3px] font-medium">1:1 <Caret /></button>
                <Divider />
                <StatusIcon label="Настройки"><circle cx="7" cy="7" r="3.500" stroke="#eee" strokeWidth="2.400" /><path d="M7 0v3M7 11v3M0 7h3M11 7h3M2 2l2 2M10 10l2 2M12 2l-2 2M4 10l-2 2" stroke="#eee" strokeWidth="2.200" /></StatusIcon>
                <Drop label="Рабочее пространство" />
                <Divider />
                <StatusIcon label="Монитор"><path d="M7 .5v13M.5 7h13" stroke="#eee" strokeWidth="1.500" /></StatusIcon>
                <Divider />
                <button aria-label="Изолировать" className="flex h-full w-[22px] items-center justify-center"><Icon><path d="M1.500 1.500h4v4h-4zM4 13l2.500-4.500L9 13z" stroke="#ddd" /><circle cx="10.500" cy="6.500" r="2.500" stroke="#ddd" /></Icon></button>
                <Divider />
                <StatusIcon label="Полный экран"><path d="M1 2.500h12v9H1z" stroke="#ddd" strokeWidth="1.200" /><path d="M8.500 4.500H11V7zM5.500 9.500H3V7z" fill="#ddd" /></StatusIcon>
                <StatusIcon label="Адаптация"><path d="M1 2.500h12M1 7h12M1 11.500h12" stroke="#ddd" strokeWidth="1.400" /></StatusIcon>
            </div>
        </footer>
    );
}

function ContextMenu() {
    return (
        <div role="menu" className="absolute top-[212px] left-[146px] flex h-[402px] w-[237px] flex-col border border-[#d8d8d8] bg-[#f1f1f1] pt-px pb-[3px] text-[9px] text-black">
            {contextMenu.map((group, g) => (
                <div key={group[0]} className="contents">
                    {g > 0 && <div className="flex h-[5px] shrink-0 items-center pr-px pl-6"><span className="h-px w-full bg-[#d2d2d2]" /></div>}
                    {group.map((item) => (
                        <button key={item} role="menuitem" className="relative flex flex-1 items-center text-left whitespace-pre">
                            <span className="flex w-[27px] shrink-0 pl-[2px]">
                                {item === "Разрешить закрепление" && (
                                    <span className="flex size-[17px] items-center justify-center bg-[#91c9f7]">
                                        <Icon w={9} h={8}><path d="m1 4 2.500 2.500L8 1" stroke="#222" strokeWidth="1.200" /></Icon>
                                    </span>
                                )}
                            </span>
                            {item}
                            {item === "Создать палитру" && (
                                <span className="absolute -top-[7px] right-[3px] left-[9px] h-[29px] rounded-[10px] border-4 border-[#fb0505] shadow-[1px_4px_5px_rgba(0,0,0,0.5),inset_0_3px_5px_rgba(0,0,0,0.35)]" />
                            )}
                        </button>
                    ))}
                </div>
            ))}
        </div>
    );
}

export default function App() {
    return (
        <div className="flex h-screen min-h-[678px] bg-white p-8 font-['Open_Sans',sans-serif]">
            <main className="relative flex min-w-0 flex-1 flex-col bg-black shadow-[6px_8px_20px_rgba(0,0,0,0.65)]">
                <Header />
                <RibbonTabs />
                <Ribbon />
                <FileTabs />
                <div className="relative min-h-0 flex-1 overflow-hidden">
                    <DrawingCanvas />
                    <ViewCube />
                    <NavBar />
                    <ToolPalette />
                    <CommandLine />
                </div>
                <StatusBar />
                <ContextMenu />
            </main>
        </div>
    );
}
